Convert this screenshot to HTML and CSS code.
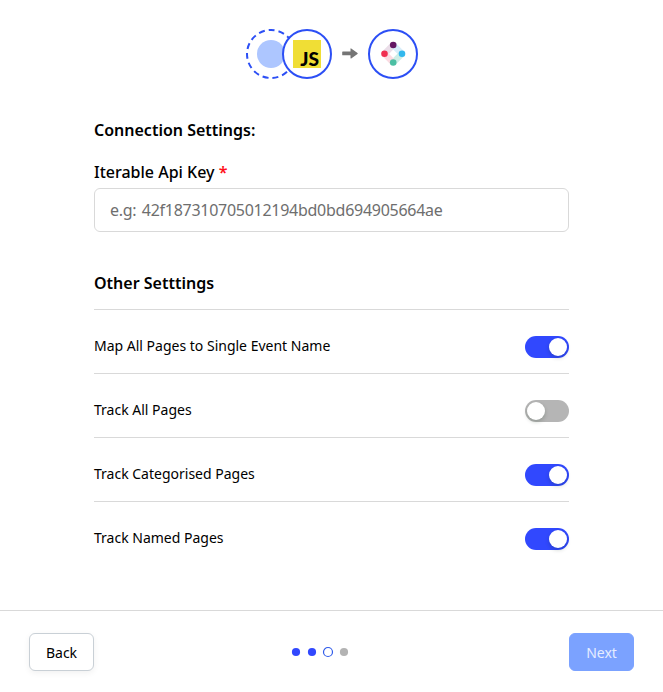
FILE: index.html
```html
<!DOCTYPE html>
<html lang="en">
<head>
<meta charset="utf-8">
<title>Connection Settings</title>
<link rel="stylesheet" href="styles.css">
</head>
<body>
<div class="modal">
  <header class="flow">
    <svg width="172" height="50" viewBox="0 0 172 50">
      <circle class="ring dashed" cx="25" cy="25" r="24"/>
      <circle cx="25" cy="25" r="14" fill="#adc6ff"/>
      <circle class="ring" cx="61" cy="25" r="24"/>
      <rect x="47" y="11" width="28" height="28" fill="#f0de35"/>
      <text class="js" x="54.3" y="36.7" textLength="18.800" lengthAdjust="spacingAndGlyphs">JS</text>
      <path d="M96.200 23.100Q96.200 22.500 96.800 22.500H104.500V19.700Q104.500 18.900 105.200 19.400L111.500 23.900Q112 24.400 111.500 24.900L105.200 29.400Q104.500 29.900 104.500 29.100V26.200H96.800Q96.200 26.200 96.200 25.700Z" fill="#757575"/>
      <circle class="ring" cx="147" cy="25" r="24"/>
      <g stroke-width="6.500">
        <path d="M138.500 24.800L147.200 16" stroke="#eadde8"/>
        <path d="M147.200 16L156 24.800" stroke="#d7edf9"/>
        <path d="M156 24.800L147.200 33.500" stroke="#cdeee6"/>
        <path d="M147.200 33.500L138.500 24.800" stroke="#fbdbe2"/>
      </g>
      <circle cx="147.200" cy="16" r="3.300" fill="#641763"/>
      <circle cx="156" cy="24.800" r="3.300" fill="#32b8ed"/>
      <circle cx="147.200" cy="33.500" r="3.300" fill="#4bbfa3"/>
      <circle cx="138.500" cy="24.800" r="3.300" fill="#f02e50"/>
    </svg>
  </header>
  <main class="content">
    <h2 class="title">Connection Settings:</h2>
    <label class="label" for="key">Iterable Api Key <span class="required">*</span></label>
    <input class="input" id="key" placeholder="e.g: 42f187310705012194bd0bd694905664ae">
    <h2 class="title other">Other Setttings</h2>
    <div class="row"><span>Map All Pages to Single Event Name</span><span class="switch on"></span></div>
    <div class="row"><span>Track All Pages</span><span class="switch"></span></div>
    <div class="row"><span>Track Categorised Pages</span><span class="switch on"></span></div>
    <div class="row"><span>Track Named Pages</span><span class="switch on"></span></div>
  </main>
  <footer class="footer">
    <button class="btn">Back</button>
    <svg class="steps" width="60" height="12" viewBox="0 0 60 12">
      <circle cx="6" cy="6" r="4.100" fill="#3148fe"/>
      <circle cx="22" cy="6" r="4.100" fill="#3148fe"/>
      <circle cx="38" cy="6" r="4.500" fill="#fff" stroke="#2f5bea" stroke-width="1.200"/>
      <circle cx="54" cy="6" r="4.100" fill="#b3b3b3"/>
    </svg>
    <button class="btn next">Next</button>
  </footer>
</div>
</body>
</html>
```
FILE: styles.css
```css
* { box-sizing: border-box; }
body {
  margin: 0;
  background: #fff;
  color: #000;
  font-family: "Noto Sans", sans-serif;
  font-size: 14px;
  line-height: 22px;
}
svg { display: block; }
.modal {
  width: 663px;
  height: 692px;
  display: flex;
  flex-direction: column;
}
.flow { padding: 29px 0 0 246px; }
.ring { fill: #fff; stroke: #2c4ff5; stroke-width: 2; }
.dashed { stroke-dasharray: 6 4; }
.js { font: 900 18px Lato, sans-serif; fill: #000; }
.content {
  flex: 1;
  padding: 39px 94px 0;
  display: flex;
  flex-direction: column;
}
.title {
  margin: 0;
  font-size: 16px;
  line-height: 24px;
  font-weight: 600;
}
.label {
  margin-top: 18px;
  font-size: 16px;
  line-height: 24px;
  font-weight: 500;
}
.required { color: #ff0f1a; font-weight: 600; }
.input {
  width: 100%;
  height: 44px;
  margin-top: 4px;
  padding: 0 15px;
  border: 1px solid #d9d9d9;
  border-radius: 6px;
  font: 16px "Noto Sans", sans-serif;
}
.input::placeholder {
  color: #6e6e6e;
  opacity: 1;
  letter-spacing: -.27px;
  word-spacing: 1.5px;
}
.other { margin: 39px 0 14px; }
.row {
  height: 64px;
  padding-top: 25px;
  border-top: 1px solid #d9d9d9;
  display: flex;
  align-items: flex-start;
  justify-content: space-between;
}
.switch {
  width: 44px;
  height: 22px;
  margin-top: 1px;
  padding: 2px;
  border-radius: 11px;
  background: #b5b5b5;
  display: flex;
}
.switch.on { background: #3148fe; justify-content: flex-end; }
.switch::before {
  content: "";
  width: 18px;
  height: 18px;
  border-radius: 50%;
  background: #fff;
  box-shadow: 0 2px 4px rgba(0, 35, 11, .2);
}
.footer {
  height: 82px;
  padding: 0 29px;
  border-top: 1px solid #d9d9d9;
  display: flex;
  align-items: center;
  justify-content: space-between;
}
.steps { margin-right: 24px; }
.btn {
  width: 65px;
  height: 38px;
  padding: 2px 0 0;
  border: 1px solid #c9d0d6;
  border-radius: 6px;
  background: #fff;
  color: #000;
  font: 14px "Noto Sans", sans-serif;
  box-shadow: 0 2px 6px rgba(0, 0, 0, .06);
}
.btn.next { border-color: #7ba2ff; background: #7ba2ff; color: #e5edff; box-shadow: none; }
```
